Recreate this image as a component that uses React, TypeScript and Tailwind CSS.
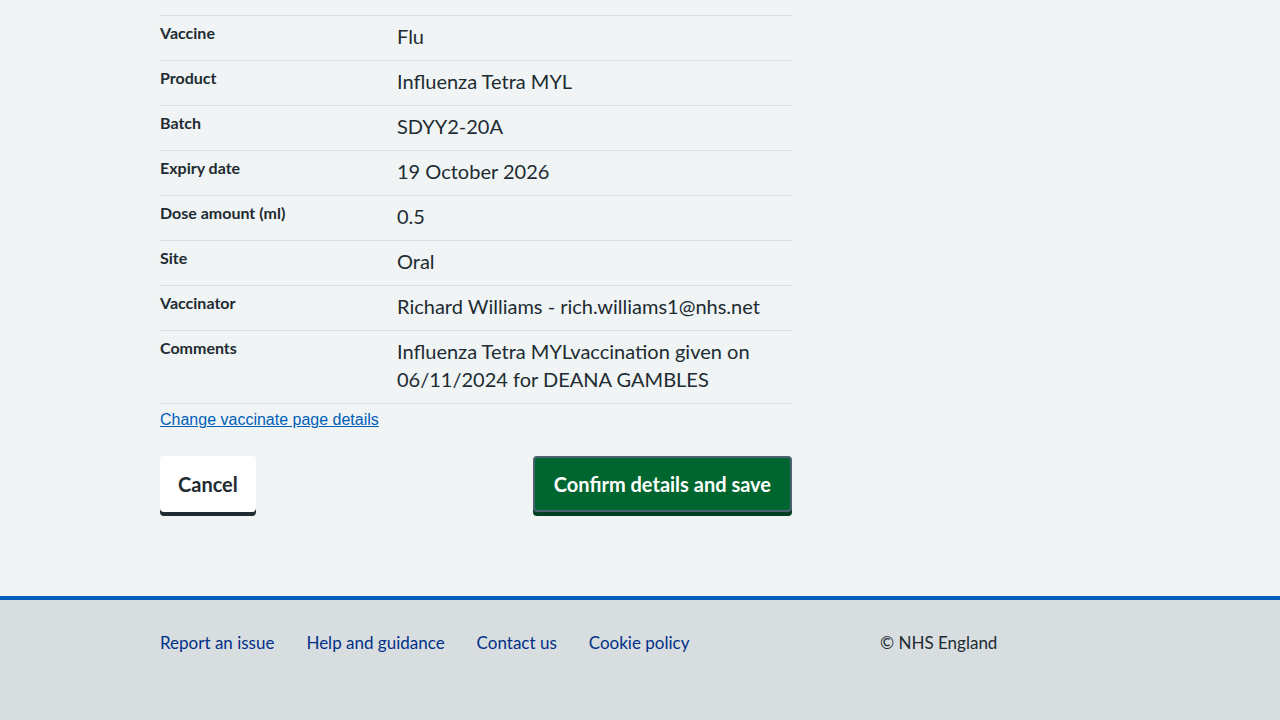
const rows: Array<{ key: string; value: string }> = [
  { key: 'Date and time', value: 'Wednesday 6 November 2024, 10:15pm' },
  { key: 'Vaccine', value: 'Flu' },
  { key: 'Product', value: 'Influenza Tetra MYL' },
  { key: 'Batch', value: 'SDYY2-20A' },
  { key: 'Expiry date', value: '19 October 2026' },
  { key: 'Dose amount (ml)', value: '0.5' },
  { key: 'Site', value: 'Oral' },
  { key: 'Vaccinator', value: 'Richard Williams - rich.williams1@nhs.net' },
  { key: 'Comments', value: 'Influenza Tetra MYLvaccination given on 06/11/2024 for DEANA GAMBLES' },
];

const font = "font-['Lato','Liberation_Sans',sans-serif]";

export default function App() {
  return (
    <div className={`min-h-[720px] bg-[#f0f4f5] text-[#212b32] ${font} flex flex-col`}>
      <main className="flex-1 pl-[160px]">
        <div className="w-[632px] mt-[-29px] pb-[80px]">
          <dl>
            {rows.map((row, i) => (
              <div key={row.key} className="flex border-b border-[#d8dde0]">
                <dt className="w-[237px] shrink-0 pt-[6px] pr-6 text-[16px] leading-[22px] font-bold">{row.key}</dt>
                <dd className={`flex-1 text-[20px] leading-[28px] ${i === 0 ? 'pt-[2px] pb-[14px]' : 'pt-[6px] pb-[10px]'}`}>{row.value}</dd>
              </div>
            ))}
          </dl>
          <a href="#" className="block mt-[5px] font-['Liberation_Sans',sans-serif] text-[16px] leading-[22px] text-[#005eb8] underline w-fit">
            Change vaccinate page details
          </a>
          <div className="flex justify-between items-start mt-[25px]">
            <button className="bg-white text-[#212b32] font-bold text-[20px] leading-[28px] px-[18px] py-[14px] rounded-[4px] shadow-[0_4px_0_#212b32]">
              Cancel
            </button>
            <button className="bg-[#00662f] text-white font-bold text-[20px] leading-[28px] px-[19px] py-3 rounded-[4px] border-2 border-[#4c6272] shadow-[0_4px_0_#00401e]">
              Confirm details and save
            </button>
          </div>
        </div>
      </main>
      <footer className="bg-[#d8dde0] border-t-4 border-[#005eb8] h-[124px] pl-[160px] pt-[31px]">
        <div className="flex w-[960px] text-[17px] leading-[24px]">
          <ul className="w-[720px] flex gap-8">
            <li><a href="#" className="text-[#003087]">Report an issue</a></li>
            <li><a href="#" className="text-[#003087]">Help and guidance</a></li>
            <li><a href="#" className="text-[#003087]">Contact us</a></li>
            <li><a href="#" className="text-[#003087]">Cookie policy</a></li>
          </ul>
          <p className="text-[#212b32]">© NHS England</p>
        </div>
      </footer>
    </div>
  );
}
